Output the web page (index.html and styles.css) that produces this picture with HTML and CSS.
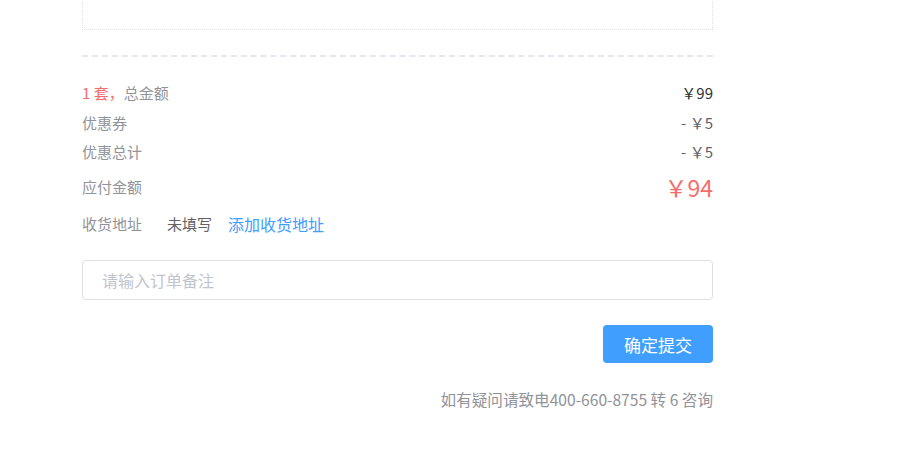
FILE: index.html
```html
<!DOCTYPE html>
<html>
<head>
<meta charset="utf-8">
<link rel="stylesheet" href="styles.css">
</head>
<body>
<div class="wrap">
  <div class="box"></div>
  <div class="sep"></div>
  <div class="rows">
    <div class="row r1"><span class="label"><span class="red">1 套，</span>总金额</span><span class="val dark">￥99</span></div>
    <div class="row r2"><span class="label">优惠券</span><span class="val">- ￥5</span></div>
    <div class="row r3"><span class="label">优惠总计</span><span class="val">- ￥5</span></div>
    <div class="row r4"><span class="label">应付金额</span><span class="val big">￥94</span></div>
    <div class="row r5"><span class="label">收货地址</span><span class="none">未填写</span><a class="add">添加收货地址</a></div>
  </div>
  <input class="remark" type="text" placeholder="请输入订单备注">
  <div class="actions"><button class="submit">确定提交</button></div>
  <div class="tip">如有疑问请致电400-660-8755 转 6 咨询</div>
</div>
</body>
</html>
```
FILE: styles.css
```css
html, body { margin: 0; padding: 0; background: #fff; }
body { font-family: "Noto Sans CJK SC", "Noto Sans", sans-serif; font-size: 15px; color: #909399; }
.wrap { width: 631px; margin-left: 82px; }
.box { height: 40px; margin-top: -10px; border: 1px dotted #dcdfe6; border-top: none; box-sizing: border-box; }
.sep { margin-top: 25px; border-top: 2px dashed #e4e7ed; }
.rows { margin-top: 21px; }
.row { display: flex; align-items: center; justify-content: space-between; line-height: 20px; }
.r1 { height: 30px; }
.r2 { height: 30px; }
.r3 { height: 28px; }
.r4 { height: 42px; }
.r5 { justify-content: flex-start; height: 32px; }
.red { color: #f56c6c; }
.val { color: #606266; }
.val.dark { color: #303133; }
.val.big { color: #f56c6c; font-size: 23px; }
.none { margin-left: 25px; color: #606266; }
.add { margin-left: 16px; color: #409eff; font-size: 16px; cursor: pointer; }
.remark { display: block; width: 100%; box-sizing: border-box; height: 40px; margin-top: 20px; border: 1px solid #dcdfe6; border-radius: 4px; padding: 0 19px; font-family: inherit; font-size: 16px; color: #606266; outline: none; }
.remark::placeholder { color: #c0c4cc; }
.actions { display: flex; justify-content: flex-end; margin-top: 25px; }
.submit { width: 110px; height: 38px; border: none; border-radius: 4px; background: #409eff; color: #fff; font-family: inherit; font-size: 17px; padding: 0; }
.tip { margin-top: 26px; text-align: right; color: #909399; font-size: 15.6px; line-height: 20px; }
```
